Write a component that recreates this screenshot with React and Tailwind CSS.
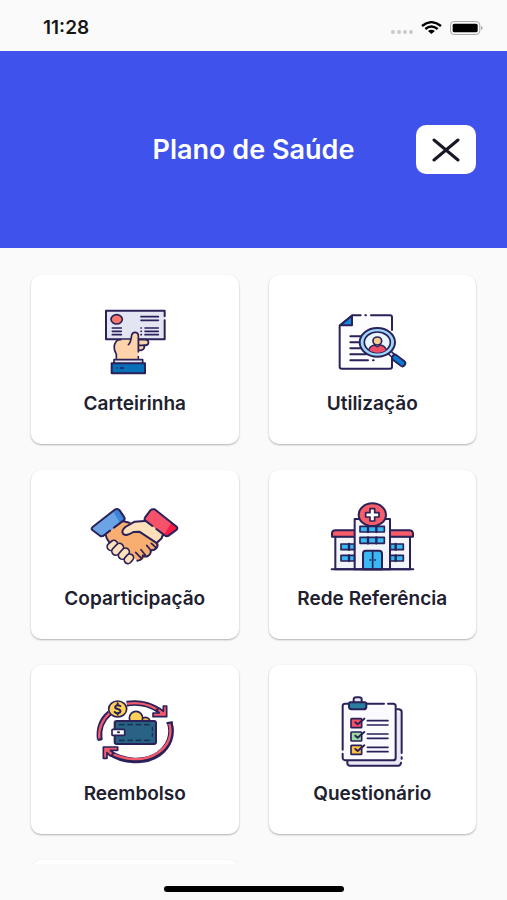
const INK = "#2a2159";

const IconFrame = ({ viewBox, children }) => (
  <svg
    viewBox={viewBox}
    className="h-[90px] w-[100px]"
    fill="none"
    stroke={INK}
    strokeWidth="6"
    strokeLinecap="round"
    strokeLinejoin="round"
    aria-hidden="true"
  >
    {children}
  </svg>
);

const CardInHandIcon = () => (
  <IconFrame viewBox="0 0 300 270">
    <path d="M63 47H239V133H63Z" fill="#e3e5f2" stroke="none" />
    <path d="M239 64V47H63V133H239V76" />
    <ellipse cx="95" cy="73" rx="17" ry="14" fill="#f9766b" strokeWidth="5" />
    <path d="M168 65H220M168 76H220M82 99H109M82 109H109M82 119H109M180 99H220M180 109H220M180 119H220M168 99H169M168 109H169M168 119H169" strokeWidth="5" />
    <path d="M160 134H182C194 136 193 150 181 151H176C182 159 173 168 160 166Z" fill="#fdd3ab" strokeWidth="5" />
    <path d="M94 193V178C85 162 84 151 94 139C98 135 105 134 113 134H137L140 120C144 108 160 110 160 122V186C160 191 158 193 154 193Z" fill="#fdd3ab" stroke="none" />
    <path d="M94 190V178C85 162 84 151 94 139C97 135 102 134 107 134M130 149C137 145 138 134 140 120C144 108 160 110 160 122V171M160 151H181M160 185V190" strokeWidth="5" />
    <path d="M87 205V194H173V205" fill="#e3e5f2" strokeWidth="5" />
    <path d="M80 205H180V235H80Z" fill="#0870b8" />
    <path d="M96 219H97M106 219H116" strokeWidth="4" />
  </IconFrame>
);

const SearchDocumentIcon = () => (
  <IconFrame viewBox="-8 0 300 270">
    <path d="M45 91L82 61H202V221H45Z" fill="#fdfdff" stroke="none" />
    <path d="M108 61H83L45 92V215Q45 221 51 221H196Q202 221 202 215V185M202 105V67Q202 61 196 61H139M122 61H124" />
    <path d="M82 62V91H46Z" fill="#1687e0" />
    <path d="M77 124H108M77 142H105M77 160H110M77 178H124M77 196H130M145 196H147" />
    <path d="M192 170L206 182" strokeWidth="16" />
    <path d="M193 171L204 181" stroke="#dceafa" strokeWidth="7" />
    <path d="M211 188L233 205" strokeWidth="23" />
    <path d="M211 188L233 205" stroke="#0b7bd0" strokeWidth="12" />
    <ellipse cx="158" cy="142" rx="53" ry="43" fill="#9bd7fb" />
    <ellipse cx="158" cy="142" rx="39" ry="31" fill="#e9f6ff" strokeWidth="5" />
    <path d="M133 165C135 153 145 151 158 151S181 153 184 165C169 176 148 176 133 165Z" fill="#f34e68" stroke="none" />
    <path d="M133 163C136 153 145 151 150 150M167 150C176 151 181 155 184 163" strokeWidth="4" />
    <path d="M152 145V152Q158 159 164 152V145" fill="#f8cb91" strokeWidth="4" />
    <ellipse cx="158" cy="138" rx="13" ry="12" fill="#f8cb91" strokeWidth="5" />
  </IconFrame>
);

const HandshakeIcon = () => (
  <IconFrame viewBox="-1 0 300 270">
    {/* palms */}
    <path d="M60 130L105 92L132 97L180 94L242 128L220 156Q222 168 215 172Q213 182 196 184Q196 201 180 202Q170 215 156 212L120 185L75 165Z" fill="#f7ae70" stroke="none" />
    <path d="M178 93L150 95L120 111Q106 123 114 132Q123 140 144 126L160 125L218 162L242 128L205 93Z" fill="#fee0bb" stroke="none" />
    <path d="M60 131Q63 147 72 157M109 92L132 98" />
    <path d="M178 93L148 95L120 111Q106 123 114 132Q123 140 144 126L162 125L211 157Q221 166 213 175Q204 183 196 180Q198 192 188 198Q178 202 173 196Q170 211 156 212M240 130Q229 136 229 145L217 156" />
    <path d="M178 149L213 175M165 161L196 182M154 178L174 196" strokeWidth="0" />
    <path d="M184 166L196 180M167 179L180 195M151 187L166 203M198 160L212 173" strokeWidth="5" />
    {/* fingers */}
    <rect x="64" y="155" width="34" height="23" rx="11" transform="rotate(-40 81 166)" fill="#fee0bb" strokeWidth="5" />
    <rect x="77" y="166" width="40" height="24" rx="12" transform="rotate(-46 97 178)" fill="#fee0bb" strokeWidth="5" />
    <rect x="97" y="180" width="37" height="23" rx="11" transform="rotate(-48 115 191)" fill="#fee0bb" strokeWidth="5" />
    <rect x="115" y="195" width="31" height="22" rx="11" transform="rotate(-50 131 206)" fill="#fee0bb" strokeWidth="5" />
    {/* cuffs */}
    <path d="M90 58L21 112Q17 116 21 120L45 138Q51 141 57 137L116 91Q120 86 115 80L103 61Q98 55 90 58Z" fill="#6ba4e5" stroke="none" />
    <path d="M83 64L98 57L120 86L104 99Z" fill="#3f83d8" stroke="none" />
    <path d="M83 108L57 135Q51 141 45 138L21 120Q17 116 21 112L90 58Q98 55 103 61L117 83Q119 89 114 93L104 98" stroke="none" />
    <path d="M74 122L57 135Q51 141 45 138L21 120Q17 116 21 112L90 58Q98 55 103 61L117 82Q120 88 114 92L86 113" />
    <path d="M208 58L274 110Q278 115 274 119L250 137Q244 141 238 136L180 92Q176 88 179 83L195 61Q200 56 208 58Z" fill="#f65269" stroke="none" />
    <path d="M258 98L276 114L249 138L237 133Z" fill="#f51c46" stroke="none" />
    <path d="M213 117L238 136Q244 141 250 137L274 119Q278 115 274 110L208 58Q200 56 195 61L179 83Q176 88 180 92L201 108" />
  </IconFrame>
);

const HospitalIcon = () => (
  <IconFrame viewBox="1 0 300 270">
    <path d="M41 139H265V238H41Z" fill="#f3f4fa" />
    <path d="M31 140V129Q32 121 41 121H263Q273 121 274 130V140Z" fill="#f75d68" />
    <path d="M99 238V87H205V238Z" fill="#f3f4fa" />
    <ellipse cx="152" cy="74" rx="41" ry="34" fill="#f75d68" />
    <path d="M145 56H159V68H172V81H159V93H145V81H132V68H145Z" fill="#fff" strokeWidth="5" />
    <g fill="#37b9f2" strokeWidth="5">
      <path d="M115 109H188V126H115ZM115 142H188V160H115Z" />
      <path d="M58 162H98V179H58ZM58 196H98V213H58ZM206 162H245V179H206ZM206 196H245V213H206Z" />
    </g>
    <path d="M139 109V126M164 109V126M139 142V160M164 142V160M82 162V179M82 196V213M222 162V179M222 196V213" strokeWidth="7" />
    <path d="M124 238V191Q124 182 132 182H172Q181 182 181 191V238Z" fill="#37b9f2" />
    <path d="M153 182V238M145 210H147M159 210H161" strokeWidth="5" />
    <path d="M30 238H275" />
  </IconFrame>
);

const RefundIcon = () => (
  <IconFrame viewBox="1 -15 300 270">
    <path d="M45 148C41 114 52 88 75 69M126 41C169 34 208 46 232 70" strokeWidth="17" strokeLinecap="butt" />
    <path d="M44 146C41 116 52 90 75 69M127 41C169 35 207 47 232 70" stroke="#f5596c" strokeWidth="7" strokeLinecap="butt" />
    <path d="M42 150L51 148" />
    <path d="M255 98C267 134 253 169 222 192C181 221 114 216 75 188" strokeWidth="17" strokeLinecap="butt" />
    <path d="M254 101C264 135 251 168 219 189C179 216 117 212 75 187" stroke="#f5596c" strokeWidth="7" strokeLinecap="butt" />
    <path d="M248 99L262 97" />
    <path d="M236 48H246V80H205V69H224L215 59L225 55L236 64Z" fill="#f5596c" strokeWidth="5" />
    <path d="M56 171H99V181H77L87 190L77 198L67 188V205H56Z" fill="#f5596c" strokeWidth="5" />
    <circle cx="182" cy="96" r="14" fill="#f4bc47" strokeWidth="5" />
    <circle cx="154" cy="84" r="20" fill="#ffd158" strokeWidth="5" />
    <rect x="90" y="93" width="124" height="69" rx="6" fill="#286385" />
    <path d="M105 104H199M105 151H199" stroke="#183455" strokeWidth="5" strokeDasharray="13 12" />
    <path d="M203 112V145" stroke="#183455" strokeDasharray="9 9" strokeWidth="4" />
    <rect x="82" y="118" width="38" height="18" rx="2" fill="#fff" strokeWidth="5" />
    <path d="M100 127H103" />
    <ellipse cx="99" cy="57" rx="27" ry="24" fill="#ffd158" strokeWidth="5" />
    <path d="M107 48Q99 43 93 48Q88 55 99 57Q111 60 106 67Q98 73 90 66M99 40V45M99 70V74" />
  </IconFrame>
);

const ChecklistIcon = () => (
  <IconFrame viewBox="-7 -15 300 270">
    <path d="M70 67H225Q231 67 231 73V217Q231 226 222 226H75Q69 226 69 219Z" fill="#e8e9f4" stroke="none" />
    <path d="M218 58H224Q232 60 232 66V189M232 202V206M230 218Q228 227 222 227H76Q69 226 69 219V210" />
    <path d="M55 40H214V211H55Z" fill="#fafaff" stroke="none" />
    <path d="M179 41H127M191 41H208Q214 42 214 48V204Q213 211 207 211H62Q56 210 55 205V191M55 179V47Q56 41 62 41H73" />
    <path d="M88 37V27Q89 22 96 22H104Q112 22 112 28V37" fill="#e8e9f4" />
    <path d="M78 37H121Q126 37 126 42V51Q125 58 118 58H82Q74 57 74 51V42Q74 37 78 37Z" fill="#287f9f" />
    <rect x="80" y="86" width="32" height="27" rx="2" fill="#f65261" strokeWidth="5" />
    <rect x="80" y="126" width="32" height="27" rx="2" fill="#9bdc9f" strokeWidth="5" />
    <rect x="80" y="166" width="32" height="27" rx="2" fill="#ffc044" strokeWidth="5" />
    <path d="M93 97L100 103L120 86M93 137L100 143L120 126M93 177L100 183L120 166" />
    <path d="M129 92H191M129 105H191M129 132H191M129 145H191M129 172H191M129 185H191" strokeWidth="5" />
  </IconFrame>
);

const options = [
  { label: "Carteirinha", Icon: CardInHandIcon },
  { label: "Utilização", Icon: SearchDocumentIcon },
  { label: "Coparticipação", Icon: HandshakeIcon },
  { label: "Rede Referência", Icon: HospitalIcon },
  { label: "Reembolso", Icon: RefundIcon },
  { label: "Questionário", Icon: ChecklistIcon },
];

const StatusBar = () => (
  <div className="flex h-[51px] shrink-0 items-center justify-between pt-1 pr-6 pl-[43px]">
    <span className="text-[19px] leading-6 font-semibold text-[#161616]">11:28</span>
    <div className="flex items-center gap-2">
      <div className="flex gap-0.5 pt-2">
        <span className="size-1 rounded-full bg-[#c9c9c9]" />
        <span className="size-1 rounded-full bg-[#c9c9c9]" />
        <span className="size-1 rounded-full bg-[#c9c9c9]" />
        <span className="size-1 rounded-full bg-[#c9c9c9]" />
      </div>
      <svg viewBox="0 0 63 39" className="h-[13px] w-[21px]" fill="none" stroke="#000" strokeWidth="7" aria-hidden="true">
        <path d="M3 15Q31-8 60 15M13 24Q31 9 50 24" />
        <path d="M21 30Q31 23 42 30L31 39Z" fill="#000" stroke="none" />
      </svg>
      <svg viewBox="0 0 99 42" className="h-[14px] w-[33px]" aria-hidden="true">
        <rect x="1.5" y="1.5" width="88" height="39" rx="11" fill="none" stroke="#a9a9a9" strokeWidth="3" />
        <rect x="8" y="8" width="75" height="26" rx="5" fill="#000" />
        <path d="M93 15Q98 17 98 21Q98 25 93 27Z" fill="#a9a9a9" />
      </svg>
    </div>
  </div>
);

const OptionCard = ({ label, Icon }) => (
  <button
    type="button"
    className="flex flex-col items-center gap-[7px] rounded-[10px] bg-white pt-5 pb-7 shadow-[0_1px_2px_rgba(0,0,0,0.3)]"
  >
    <Icon />
    <span className="text-[19px] leading-6 font-semibold whitespace-nowrap text-[#20202f]">{label}</span>
  </button>
);

const App = () => {
  return (
    <div className="flex h-screen flex-col bg-[#fafafa] font-['Inter','Liberation_Sans',sans-serif]">
      <StatusBar />

      <header className="grid shrink-0 grid-cols-[60px_1fr_60px] items-center bg-[#4052ec] px-[31px] py-[74px]">
        <h1 className="col-start-2 text-center text-[27px] leading-8 font-semibold text-white">
          Plano de Saúde
        </h1>
        <button
          type="button"
          aria-label="Fechar"
          className="flex h-[49px] items-center justify-center rounded-[10px] bg-white"
        >
          <svg viewBox="0 0 28 24" className="h-6 w-7" fill="none" stroke="#171727" strokeWidth="3" strokeLinecap="round" aria-hidden="true">
            <path d="M2 2L26 22M26 2L2 22" />
          </svg>
        </button>
      </header>

      <main className="min-h-0 flex-1 overflow-hidden px-[31px] pt-[27px]">
        <div className="grid grid-cols-2 gap-x-[30px] gap-y-[26px]">
          {options.map((option) => (
            <OptionCard key={option.label} {...option} />
          ))}
          <div className="h-[169px] rounded-[10px] bg-white shadow-[0_1px_2px_rgba(0,0,0,0.3)]" />
        </div>
      </main>

      {/* Home indicator */}
      <footer className="flex h-9 shrink-0 items-end justify-center pb-2">
        <div className="h-1.5 w-[180px] rounded-full bg-black" />
      </footer>
    </div>
  );
};

export default App;
